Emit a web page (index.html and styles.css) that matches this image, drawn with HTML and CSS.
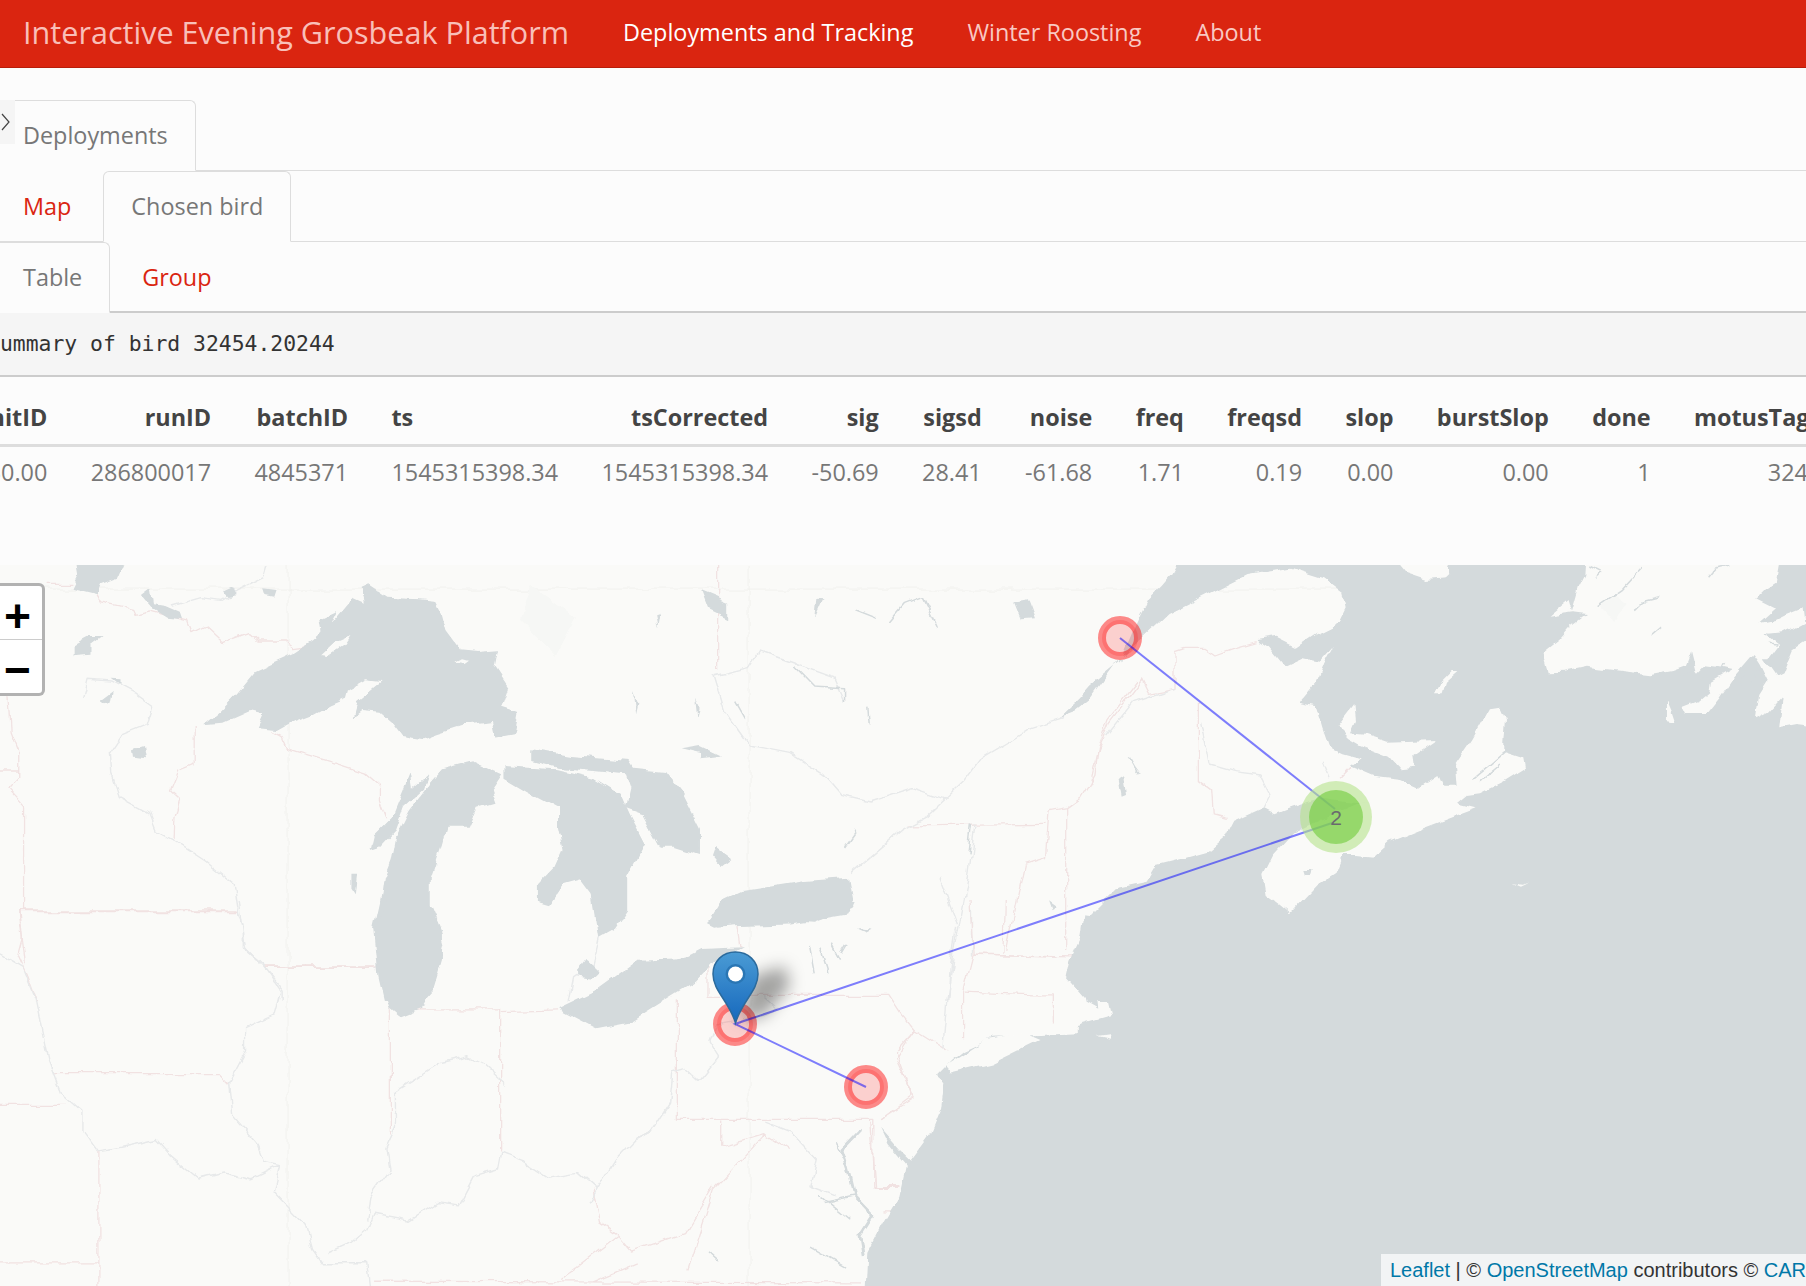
FILE: index.html
```html
<!DOCTYPE html>
<html lang="en">
<head>
    <meta charset="UTF-8">
    <title>Interactive Evening Grosbeak Platform</title>
    <link rel="stylesheet" href="styles.css">
</head>
<body>
    <nav class="navbar">
        <span class="brand">Interactive Evening Grosbeak Platform</span>
        <ul class="nav-links">
            <li class="active">Deployments and Tracking</li>
            <li>Winter Roosting</li>
            <li>About</li>
        </ul>
    </nav>

    <main class="content">
        <button class="sidebar-toggle" aria-label="Toggle sidebar">
            <svg width="10" height="18" viewBox="0 0 10 18"><path d="M1 1l7 8-7 8" fill="none" stroke="#444" stroke-width="1.2"/></svg>
        </button>

        <ul class="tabs">
            <li class="tab active">Deployments</li>
        </ul>
        <ul class="tabs">
            <li class="tab">Map</li>
            <li class="tab active">Chosen bird</li>
        </ul>
        <ul class="tabs tabs-last">
            <li class="tab active">Table</li>
            <li class="tab">Group</li>
        </ul>

        <pre class="summary">Summary of bird 32454.20244</pre>

        <div class="table-wrap">
            <table class="bird-table">
                <thead>
                    <tr>
                        <th>hitID</th><th>runID</th><th>batchID</th><th class="left">ts</th><th>tsCorrected</th><th>sig</th><th>sigsd</th><th>noise</th><th>freq</th><th>freqsd</th><th>slop</th><th>burstSlop</th><th>done</th><th class="left tag-col">motusTagID</th>
                    </tr>
                </thead>
                <tbody>
                    <tr>
                        <td>30.00</td><td>286800017</td><td>4845371</td><td class="left">1545315398.34</td><td>1545315398.34</td><td>-50.69</td><td>28.41</td><td>-61.68</td><td>1.71</td><td>0.19</td><td>0.00</td><td>0.00</td><td>1</td><td>32454.00</td>
                    </tr>
                </tbody>
            </table>
        </div>

        <div class="map">
            <svg class="map-svg" width="1806" height="722" viewBox="0 564 1806 722">
                <defs>
                    <linearGradient id="pinFill" x1="0" y1="0" x2="0" y2="1">
                        <stop offset="0" stop-color="#4a9bd4"/>
                        <stop offset="1" stop-color="#1668bd"/>
                    </linearGradient>
                    <filter id="pinShadow" x="-60%" y="-60%" width="220%" height="220%">
                        <feGaussianBlur stdDeviation="8"/>
                    </filter>
                    <!-- roughens the straight edges of the traced coast -->
                    <filter id="coast" filterUnits="userSpaceOnUse" x="-30" y="534" width="1866" height="782">
                        <feTurbulence type="fractalNoise" baseFrequency=".05" numOctaves="3" seed="4" result="noise"/>
                        <feDisplacementMap in="SourceGraphic" in2="noise" scale="9" xChannelSelector="R" yChannelSelector="G"/>
                        <feGaussianBlur stdDeviation=".45"/>
                    </filter>
                </defs>

                <g filter="url(#coast)">
                <!-- graticule -->
                <path class="grid" d="M0 588H1806M288 564V1286M749 564V1286"/>

                <!-- west and middle of the map, traced at 2.24 x 3 -->
                <g transform="translate(0 560) scale(.4464 .3333)">
                    <path class="patch" d="M1190 70L1290 170L1245 285L1165 180Z"/>
                    <path class="state" d="M100 70H160M215 100L225 125L295 145L300 160L335 150L420 180L430 215L460 195L500 245L560 215L580 240L640 240L660 260L690 255"/>
                    <path class="state" d="M435 495V610L400 630L382 690L402 715L392 770L390 835M610 515L630 530L640 560L740 600L820 635L850 670L850 720L865 775"/>
                    <path class="state" d="M20 400L25 510L42 570L42 650L18 685L55 740V1050H530M0 630H42M590 1218H850M45 1050L50 1130L40 1180L60 1240L82 1320"/>
                    <path class="river" d="M185 410L195 355L250 360L300 395L342 435L330 490L275 520L245 580L248 640L265 710L335 760L350 810L385 835L460 900L525 970L535 1060L545 1100L545 1160L585 1205L632 1285V1320"/>
                    <path class="river" d="M385 135L450 110L495 118L530 90L590 50L598 12"/>
                    <path class="river" d="M1340 1130L1325 1215L1285 1250L1275 1320"/>
                    <path class="water" d="M455 490L490 450L530 395L570 330L610 305L660 275L700 240L720 215L715 175L755 150L740 190L790 110L815 125L808 80L825 70L870 110L940 115L975 120L990 160L1000 210L1030 265L1070 270L1118 265L1110 320L1140 380L1125 440L1160 455L1150 520L1110 530L1102 480L1050 490L980 520L950 535L900 525L880 490L850 455L810 450L790 470L800 420L855 360L820 355L780 385L775 410L740 430L700 460L660 480L620 510L575 505L590 460L560 450L500 485Z"/>
                    <path class="land" d="M720 282L750 245L785 225L770 255L735 285ZM1020 305L1035 295L1050 300L1040 310Z"/>
                    <path class="water" d="M860 1320L848 1250L838 1100L855 1000L860 950L875 900L885 830L915 750L960 670L990 625L1060 600L1125 640L1100 690L1110 725L1070 740L1050 800L1000 800L990 850L965 950L965 1030L990 1110L990 1200L970 1290L950 1320Z"/>
                    <path class="water" d="M828 870L835 830L880 770L920 640L925 680L960 640L950 680L905 735L885 810L850 860Z"/>
                    <path class="water" d="M1130 615L1180 620L1250 625L1330 650L1390 700L1410 760L1445 850L1405 950L1405 1050L1380 1100L1340 1130L1325 1000L1300 955L1260 970L1230 1030L1205 1020L1205 970L1240 920L1260 860L1250 800L1250 740L1180 690L1130 650Z"/>
                    <path class="water" d="M1190 565L1280 585L1410 600L1420 620L1490 630L1530 700L1568 800V885L1510 860L1480 860L1440 760L1400 740L1410 680L1400 640L1330 630L1250 620L1190 600Z"/>
                    <path class="water" d="M160 80L175 40L170 0H280L265 50L225 70L215 100L185 90ZM340 85L345 130L370 135L405 155L410 175L375 170L345 145L320 105ZM500 90L520 78L528 100L505 105ZM585 85L615 90L610 110L590 105ZM165 250L200 225L230 225L205 250L205 275L165 280ZM225 420L255 390L250 425L235 430ZM250 350L270 352L270 372ZM298 565L320 555L325 595L300 590ZM785 935L800 935L795 1000L785 980ZM1470 160L1480 155L1475 195ZM1420 395L1430 430L1425 460ZM1525 565L1568 555V578ZM1555 410L1565 440L1560 470Z"/>
                </g>

                <!-- Quebec and the north of New York, traced at 1.42 x 3 -->
                <g transform="translate(700 560) scale(.7052 .3333)">
                    <path class="state" d="M495 750L520 740L540 710L560 640L565 560L580 470L620 360M295 795L490 790M495 750L490 890L460 910L435 1170M520 740L520 1170M385 1180L530 1185M25 12V330"/>
                    <path class="river" d="M515 470L470 500L440 540L400 590L375 660L350 710L320 770L285 810L240 890L215 935"/>
                    <path class="river" d="M350 715L300 680L240 720L200 700L175 640L130 580L70 555L35 450L20 345L70 320L85 270L125 300L190 350L205 425"/>
                    <path class="river" d="M390 790L380 960L360 1180L350 1320M340 950L365 1090M385 1040L385 1180"/>
                    <path class="water" d="M445 125L465 118L475 175L455 178ZM0 90L40 125L40 175L10 145ZM165 110L175 112L162 175ZM0 555L30 585L0 592ZM25 860L45 890L30 915L20 890ZM10 1090L30 1020L60 990L150 960L210 950L218 1040L160 1085L90 1075L20 1100ZM225 1095L245 1100L235 1105ZM495 1015L505 1030L500 1045Z"/>
                    <path class="water-line" d="M270 180L290 130L315 110L335 195M220 150L250 175M135 320L160 375L205 380L205 425M50 420L65 475M238 440L240 490M205 855L220 810M385 790L380 880"/>
                </g>

                <!-- Gulf of St Lawrence and Maine, traced at 3 x 3 -->
                <g transform="translate(1090 564) scale(.3333)">
                    <path class="state" d="M0 655L20 570L60 470L155 345L175 385L255 370V260L285 250H345L375 270L430 250L500 230M325 410V650L365 680L370 750L410 760M750 640L780 610"/>
                    <path class="river" d="M50 510L130 410L190 390L255 370M335 470L360 600L430 620L510 630L540 690L520 730M700 590L720 640"/>
                    <path class="water-line" d="M118 580L135 610L150 630"/>
                    <path class="water" d="M85 640L100 630L108 690L95 695Z"/>
                    <path class="water" d="M290 -60L245 25L215 60L175 100L150 150L130 195L90 290L30 340L0 365L-30 400L-91 458L-49 443L0 405L40 350L80 295L130 240L160 215L230 150L330 100L470 30L600 8L700 40L760 85L770 130L750 170L680 205L620 245L560 215L500 225L540 250L585 305L640 280L690 290L730 245L700 300L680 350L630 410L680 420L700 490L720 545L760 565L815 580L780 605L850 635L930 645L985 670L1045 630L1060 665L1100 665L1095 600L1150 520L1200 430L1230 425L1245 460L1240 530L1240 560L1300 580L1305 610L1240 650L1170 685L1130 690L1100 715L1160 730L1080 760L1000 790L900 830L850 875L800 870L760 870L740 920L680 960L600 1045L570 1020L530 990L520 930L550 870L610 805L680 770L810 715L860 720L760 710L680 700L600 725L550 745L520 730L430 770L420 790L410 810L350 860L280 880L200 900L170 950L80 970L0 1050L-17 1048L-27 1118L-59 1188L-70 1238L-10 1308H2300V-60Z"/>
                    <path class="land" d="M740 485L790 420L795 470L780 505L830 510L890 530L1035 525L970 570L975 605L930 610L900 575L810 540L775 520ZM1265 958L1290 968L1315 956L1295 962Z"/>
                    <path class="water-line" d="M1150 640L1210 590L1250 555M1170 650L1230 600"/>
                    <path class="water" d="M640 915L665 915L660 930L645 930Z"/>
                </g>

                <!-- Anticosti and Newfoundland, traced at 3 x 3 -->
                <g transform="translate(1286 564) scale(.3333)">
                    <path class="land" d="M290 -60L360 25L420 45L480 40L490 30L465 -60ZM447 385L465 350L500 315L520 315L480 350L470 385ZM1140 405L1155 440L1165 470L1140 465Z"/>
                    <path class="land" d="M900 -60L895 30L875 70L855 140L845 105L785 155L860 145L900 150L860 180L820 225L770 265L785 322L830 320L900 305L980 315L1090 328L1160 315L1200 300L1215 260L1230 320L1250 300L1290 305L1335 315L1275 350L1270 385L1240 410L1190 430L1200 450L1260 450L1300 400L1340 340L1400 270L1420 300L1445 350L1420 390L1410 460L1450 440L1490 395L1480 490L1530 480L1620 490V225H1560L1520 250L1490 325L1470 335L1445 300L1430 280L1450 280L1480 240L1440 210L1490 205L1555 170L1550 130L1500 150L1470 165L1420 175L1470 130L1410 100L1440 70L1470 50L1490 -60Z"/>
                    <path class="patch" d="M945 120L985 90L1025 120L985 165Z"/>
                    <path class="water-line" d="M935 122L1010 70L1065 10M1045 140L1080 105L1120 95M1095 210L1125 185M910 0L950 20L930 40M1265 40L1290 10L1330 0M1170 340L1225 310M1240 350L1255 305M1300 315L1310 295M1360 360L1385 320M1395 355L1420 310M1440 210L1480 218M1445 238L1475 240"/>
                </g>

                <!-- lower left, traced at 1.57 x 3 -->
                <g transform="translate(0 900) scale(.6378 .335)">
                    <path class="state" d="M30 32H372M85 515H345L360 545M415 198H590M612 325V700M612 322H785V745M785 330L875 325M1062 290V652M1110 282H1395L1415 340L1435 385L1485 445M1062 652H1370V850H1410M0 607H105M0 1080H155M155 745V1200M585 1135L1350 1140M1130 655V735L1200 695L1240 745M1435 385L1405 450L1430 580L1380 650M1155 70L1160 135M1110 180V282M1080 1100L1120 860L1200 695M970 1000L880 1130M30 32L40 190M1000 1080L925 1140M930 860L940 960L970 1000L990 1045L1075 990L1120 850"/>
                    <path class="river" d="M0 155L35 195L55 290L75 470L95 570L130 630L130 680L155 745L190 735L245 712L268 760L312 830L350 812L395 832L440 790"/>
                    <path class="river" d="M375 0L385 140L415 200L440 270L430 340L385 380L385 450L360 540L365 640L405 730L415 780L440 790L430 870L480 970L490 1040L505 1080L575 1080L582 1200"/>
                    <path class="river" d="M1055 510L1050 600L1020 690L990 720L965 770L935 860L905 810L860 825L820 775L785 750L780 800L745 820L720 910L685 900L640 955L585 935L575 980L550 1020L515 1050"/>
                    <path class="river" d="M795 550L760 490L735 465L690 485L620 570L620 680L605 740L610 800L580 880L575 955"/>
                    <path class="river" d="M1055 510L1075 500L1095 535L1125 465L1110 420L1120 370L1150 360M1200 285L1220 320L1150 370M935 860L925 900M1000 710L1020 690M1480 440L1490 200L1500 80M1200 660L1240 690L1280 770L1270 850L1310 880"/>
                    <path class="water" d="M605 0L590 80L595 220L612 320L628 345L660 320L680 250L695 130L685 60L672 0Z"/>
                    <path class="water" d="M875 320L935 265L1000 175L1060 172L1075 165L1100 140L1165 135L1120 180L1090 240L1040 300L990 360L935 380L905 350Z"/>
                    <path class="water" d="M905 205L918 170L940 210L928 232L905 225ZM1110 60L1140 0H1340L1330 40L1240 70L1150 75L1125 80ZM1345 75L1368 80L1360 88Z"/>
                    <path class="water-line" d="M1268 140L1275 210M1285 135L1298 215M1305 130L1318 175M1328 125L1320 150M1330 790L1310 720M1285 880L1330 950M1340 880L1290 900M1270 1030L1325 1090M1110 1050L1125 1075"/>
                    <path class="water-line bay" d="M1350 680L1320 740L1330 800L1340 880L1370 940L1350 1000L1355 1060"/>
                </g>

                <!-- lower right coast, traced at 1.56 x 3 -->
                <g transform="translate(800 900) scale(.6414 .335)">
                    <path class="state" d="M258 272L365 280H395V360M270 158L400 165M320 0L318 155M255 272L270 158L265 0M255 272L255 410M110 655L118 852H155M130 925L155 925M178 385L150 470L178 585L125 650"/>
                    <path class="water" d="M445 285V300L465 322L462 270L478 280L485 340L430 370L430 395L375 400L300 405L255 445L235 475L212 520L225 540L220 620L205 690L172 775L155 745L125 680L135 720L165 790L155 880L130 960L105 1050L100 1250H1700V285Z"/>
                    <path class="land" d="M225 492L290 412L350 395L375 415L300 485L235 515ZM462 400L480 395L482 408Z"/>
                </g>
                </g>

                <!-- tracks and markers -->
                <circle class="stop" cx="735" cy="1023" r="18"/>
                <circle class="stop" cx="866" cy="1086" r="18"/>
                <circle class="stop" cx="1120" cy="637" r="18"/>
                <polyline class="track" points="866,1086 735,1023 1332,822"/>
                <polyline class="track" points="1335,808 1120,637"/>
                <circle class="cluster-outer" cx="1336" cy="816" r="36"/>
                <circle class="cluster-inner" cx="1336" cy="816" r="27"/>
                <text class="cluster-count" x="1336" y="824">2</text>

                <path class="pin-shadow" d="M738 1020L752 975L785 965L790 985L765 1015Z" filter="url(#pinShadow)"/>
                <path class="pin" d="M735.5 1022C729 1000 713 990 713 973C713 960 723 951 735.5 951C748 951 758 960 758 973C758 990 742 1000 735.5 1022Z"/>
                <circle class="pin-ring" cx="735.5" cy="973" r="10"/>
                <circle class="pin-dot" cx="735.5" cy="973" r="7.5"/>
            </svg>

            <div class="zoom-control">
                <span class="zoom-btn">+</span>
                <span class="zoom-btn">−</span>
            </div>
            <div class="attribution"><a>Leaflet</a> | © <a>OpenStreetMap</a> contributors © <a>CARTO</a></div>
        </div>
    </main>
</body>
</html>
```

FILE: styles.css
```css
* {
    box-sizing: border-box;
}
html, body {
    margin: 0;
    height: 100%;
}
body {
    height: 1286px;
    overflow: hidden;
    background: #fcfcfc;
    font-family: "Open Sans", sans-serif;
    font-size: 23.4px;
    color: #777;
    display: flex;
    flex-direction: column;
}

/* top bar */
.navbar {
    height: 68px;
    flex: none;
    display: flex;
    align-items: center;
    padding: 0 0 4px 23px;
    background: #da2510;
    border-bottom: 1px solid #b81d0a;
}
.brand {
    font-size: 30.6px;
    color: #f9bfb8;
    width: 600px;
}
.nav-links {
    display: flex;
    gap: 54px;
    list-style: none;
    margin: 0;
    padding: 0;
    color: #f9c9c3;
}
.nav-links .active {
    color: #fff;
}

/* tab rows */
.content {
    position: relative;
    flex: 1;
    display: flex;
    flex-direction: column;
    padding-top: 32px;
    min-height: 0;
}
.sidebar-toggle {
    position: absolute;
    left: 0;
    top: 32px;
    width: 15px;
    height: 44px;
    padding: 0 0 0 1px;
    border: 0;
    background: #f5f5f5;
    display: flex;
    align-items: center;
    z-index: 2;
}
.tabs {
    height: 71px;
    margin: 0 0 0 -5px;
    padding: 0;
    list-style: none;
    display: flex;
    border-bottom: 1px solid #ddd;
}
.tabs-last {
    border-bottom: 2px solid #ccc;
}
.tab {
    height: 71px;
    margin-right: 4px;
    padding: 18px 27px 0;
    color: #da2510;
    border: 1px solid transparent;
    line-height: 32px;
}
.tab.active {
    color: #777;
    background: #fcfcfc;
    border-color: #ddd #ddd #fcfcfc;
    border-radius: 6px 6px 0 0;
}

/* summary and table */
.summary {
    height: 64px;
    flex: none;
    margin: 0;
    text-indent: -13px;
    background: #f5f5f5;
    border-bottom: 2px solid #ccc;
    font-family: "DejaVu Sans Mono", monospace;
    font-size: 21.4px;
    line-height: 62px;
    color: #333;
}
.table-wrap {
    flex: none;
    height: 188px;
    overflow: hidden;
}
.bird-table {
    border-collapse: collapse;
    margin-left: -34px;
    white-space: nowrap;
}
.bird-table th,
.bird-table td {
    padding: 0 21.7px;
    text-align: right;
}
.bird-table .left {
    text-align: left;
}
.bird-table .tag-col {
    min-width: 217px;
}
.bird-table th {
    height: 68px;
    padding-top: 14px;
    border-bottom: 3px solid #ddd;
    color: #444;
    font-weight: 700;
}
.bird-table td {
    height: 52px;
}

/* map */
.map {
    position: relative;
    flex: 1;
    overflow: hidden;
    background: #fafaf8;
}
.map-svg {
    display: block;
}
.grid {
    fill: none;
    stroke: #f0f0ee;
    stroke-width: 1;
}
.state, .river, .water-line {
    fill: none;
    stroke-linejoin: round;
    vector-effect: non-scaling-stroke;
}
.state {
    stroke: #f1e2e2;
    stroke-width: 1.3;
}
.river {
    stroke: #e7e9ea;
    stroke-width: 1.4;
}
.water-line {
    stroke: #d4dadc;
    stroke-width: 1.5;
}
.water-line.bay {
    stroke-width: 3;
}
.water {
    fill: #d4dadc;
}
.land {
    fill: #fafaf8;
}
.patch {
    fill: #f6f7f5;
}
.track {
    fill: none;
    stroke: #0000ff;
    stroke-opacity: .5;
    stroke-width: 2;
}
.stop {
    fill: #ff0000;
    fill-opacity: .17;
    stroke: #ff0000;
    stroke-opacity: .45;
    stroke-width: 8;
}
.cluster-outer {
    fill: rgba(181, 226, 140, .6);
}
.cluster-inner {
    fill: rgba(110, 204, 57, .6);
}
.cluster-count {
    font-family: "Liberation Sans", sans-serif;
    font-size: 21px;
    text-anchor: middle;
    fill: #6a6a6e;
}
.pin {
    fill: url(#pinFill);
    stroke: #2b6a9c;
    stroke-width: 1.5;
}
.pin-ring {
    fill: #2a76b4;
}
.pin-dot {
    fill: #fff;
}
.pin-shadow {
    fill: rgba(0, 0, 0, .35);
}
.zoom-control {
    position: absolute;
    left: -12px;
    top: 18px;
    width: 57px;
    height: 113px;
    display: flex;
    flex-direction: column;
    background: #fff;
    border: 3px solid rgba(0, 0, 0, .3);
    border-radius: 6px;
}
.zoom-btn {
    height: 53px;
    padding-left: 2px;
    text-align: center;
    font-family: "Liberation Mono", monospace;
    font-size: 46px;
    font-weight: 700;
    line-height: 68px;
    color: #000;
}
.zoom-btn + .zoom-btn {
    border-top: 1px solid #ccc;
}
.attribution {
    position: absolute;
    left: 1381px;
    bottom: 0;
    height: 32px;
    padding-left: 9px;
    white-space: nowrap;
    background: rgba(255, 255, 255, .7);
    font-family: "Liberation Sans", sans-serif;
    font-size: 20px;
    line-height: 32px;
    color: #333;
}
.attribution a {
    color: #0078a8;
}
```
